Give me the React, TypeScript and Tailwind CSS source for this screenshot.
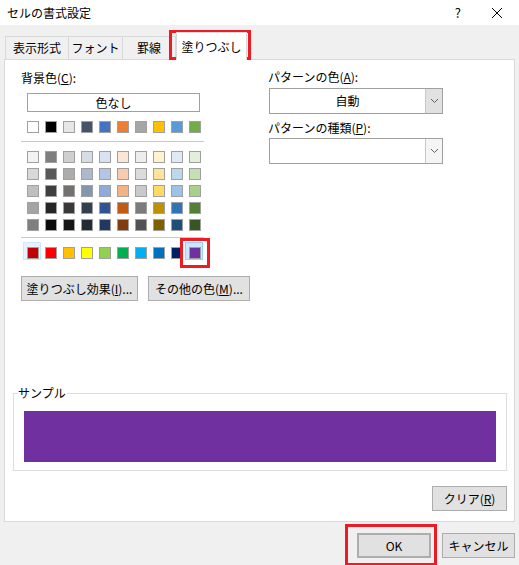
const themeTop = ['#ffffff', '#000000', '#e7e6e6', '#44546a', '#4472c4', '#ed7d31', '#a5a5a5', '#ffc000', '#5b9bd5', '#70ad47'];

const themeShades = [
  ['#f2f2f2', '#7f7f7f', '#d0cece', '#d6dce4', '#d9e2f3', '#fbe5d5', '#ededed', '#fff2cc', '#deebf6', '#e2efd9'],
  ['#d8d8d8', '#595959', '#aeabab', '#adb9ca', '#b4c6e7', '#f7cbac', '#dbdbdb', '#fee599', '#bdd7ee', '#c5e0b3'],
  ['#bfbfbf', '#3f3f3f', '#757070', '#8496b0', '#8eaadb', '#f4b183', '#c9c9c9', '#ffd965', '#9cc3e5', '#a8d08d'],
  ['#a5a5a5', '#262626', '#3a3838', '#323f4f', '#2f5496', '#c55a11', '#7b7b7b', '#bf9000', '#2e75b5', '#538135'],
  ['#7f7f7f', '#0c0c0c', '#171616', '#222a35', '#1f3864', '#833c0b', '#525252', '#7f6000', '#1e4e79', '#375623'],
];

const standard = ['#c00000', '#ff0000', '#ffc000', '#ffff00', '#92d050', '#00b050', '#00b0f0', '#0070c0', '#002060', '#7030a0'];

const Swatch = ({ color }: { color: string }) => (
  <div className="w-[18px] h-[12px] flex justify-center">
    <div className="w-[12px] h-[12px] border border-[#a0a0a0]" style={{ backgroundColor: color }} />
  </div>
);

const SwatchRow = ({ colors }: { colors: string[] }) => (
  <div className="flex ml-[3px]">
    {colors.map((c, i) => (
      <Swatch key={i} color={c} />
    ))}
  </div>
);

const Chevron = () => (
  <svg width="9" height="6" viewBox="0 0 9 6" fill="none">
    <path d="M1 1l3.5 3.5L8 1" stroke="#606060" strokeWidth="1" />
  </svg>
);

const Combo = ({ value, grayButton }: { value: string; grayButton?: boolean }) => (
  <div className="flex w-[174px] h-[26px] border border-[#a0a0a0] bg-white">
    <div className="flex-1 flex items-center justify-center">{value}</div>
    <div
      className={`w-[17px] flex items-center justify-center border-l border-[#c8c8c8] ${
        grayButton ? 'bg-[#e1e1e1]' : 'bg-[#f5f5f5]'
      }`}
    >
      <Chevron />
    </div>
  </div>
);

const Btn = ({ children, className }: { children: React.ReactNode; className: string }) => (
  <div
    className={`flex items-center justify-center bg-[#e1e1e1] border border-[#adadad] ${className}`}
  >
    {children}
  </div>
);

const App = () => {
  return (
    <div
      className="relative w-[519px] h-[565px] overflow-hidden bg-[#f0f0f0] text-[12px] leading-[16px] text-black"
      style={{ fontFamily: '"Noto Sans CJK JP", "Noto Sans", sans-serif' }}
    >
      {/* title bar */}
      <div className="h-[25px] bg-white flex items-center pl-[7px] pr-[16px]">
        <span className="flex-1 pt-[1px]">セルの書式設定</span>
        <span className="text-[13px] mr-[30px]">?</span>
        <svg width="12" height="12" viewBox="0 0 12 12">
          <path d="M1 1l10 10M11 1L1 11" stroke="#000" strokeWidth="1" />
        </svg>
      </div>

      {/* tabs */}
      <div className="flex items-end h-[34px] pl-[5px]">
        <div className="w-[64px] h-[23px] flex items-center justify-center border border-b-0 border-[#d9d9d9]">
          表示形式
        </div>
        <div className="w-[54px] h-[23px] flex items-center justify-center border border-b-0 border-l-0 border-[#d9d9d9]">
          フォント
        </div>
        <div className="w-[53px] h-[23px] flex items-center justify-center border border-b-0 border-l-0 border-[#d9d9d9]">
          罫線
        </div>
        <div className="relative z-10 w-[71px] h-[28px] -mb-[1px] flex items-center justify-center bg-white border border-b-0 border-[#d9d9d9]">
          塗りつぶし
        </div>
      </div>

      {/* panel */}
      <div className="ml-[4px] w-[511px] h-[463px] bg-white border border-[#d9d9d9] flex flex-col">
        <div className="flex">
          {/* left column */}
          <div className="w-[247px] pl-[16px] pt-[10px] flex flex-col">
            <div>
              背景色(<span className="underline">C</span>):
            </div>
            <div className="mt-[7px] ml-[6px] w-[173px] h-[19px] border border-[#a0a0a0] flex items-center justify-center">
              色なし
            </div>
            <div className="mt-[9px]">
              <SwatchRow colors={themeTop} />
            </div>
            <div className="mt-[8px] w-[183px] h-[1px] bg-[#c8c8c8]" />
            <div className="mt-[9px] flex flex-col gap-[5px]">
              {themeShades.map((row, i) => (
                <SwatchRow key={i} colors={row} />
              ))}
            </div>
            <div className="mt-[6px] w-[183px] h-[1px] bg-[#c8c8c8]" />
            <div className="mt-[9px] relative">
              <div className="absolute left-[2px] -top-[5px] w-[18px] h-[18px] bg-[#e5f3ff] border border-[#cce8ff]" />
              <div className="absolute left-[164px] -top-[5px] w-[18px] h-[18px] bg-[#cce8ff] border border-[#99d1ff]" />
              <div className="relative">
                <SwatchRow colors={standard} />
              </div>
              <div className="absolute left-[159px] -top-[9px] w-[30px] h-[30px] border-[3px] border-[#ed1c24]" />
            </div>
            <div className="mt-[17px] flex gap-[10px]">
              <Btn className="w-[117px] h-[25px]">
                塗りつぶし効果(<span className="underline">I</span>)...
              </Btn>
              <Btn className="w-[102px] h-[25px]">
                その他の色(<span className="underline">M</span>)...
              </Btn>
            </div>
          </div>

          {/* right column */}
          <div className="pt-[9px] flex flex-col">
            <div className="pl-[16px]">
              パターンの色(<span className="underline">A</span>):
            </div>
            <div className="mt-[3px] ml-[17px]">
              <Combo value="自動" grayButton />
            </div>
            <div className="mt-[6px] pl-[16px]">
              パターンの種類(<span className="underline">P</span>):
            </div>
            <div className="mt-[2px] ml-[17px]">
              <Combo value="" />
            </div>
          </div>
        </div>

        {/* sample */}
        <div className="relative mt-[92px] ml-[8px] w-[494px] h-[78px] border border-[#dcdcdc]">
          <span className="absolute left-[4px] -top-[9px] bg-white pr-[1px]">サンプル</span>
          <div className="mt-[17px] ml-[10px] w-[472px] h-[51px] bg-[#7030a0]" />
        </div>

        <div className="flex justify-end mt-[15px] pr-[7px]">
          <Btn className="w-[75px] h-[25px]">
            クリア(<span className="underline">R</span>)
          </Btn>
        </div>
      </div>

      {/* bottom buttons */}
      <div className="flex justify-end gap-[11px] mt-[11px] pr-[4px]">
        <div className="relative">
          <Btn className="w-[74px] h-[25px] border-2 border-[#0078d7]">OK</Btn>
          <div className="absolute -left-[12px] -top-[9px] w-[92px] h-[42px] border-[3px] border-[#ed1c24]" />
        </div>
        <Btn className="w-[73px] h-[25px]">キャンセル</Btn>
      </div>

      {/* selected tab highlight */}
      <div className="absolute left-[169px] top-[30px] w-[82px] h-[30px] border-[3px] border-[#ed1c24]" />
    </div>
  );
};

export default App;
